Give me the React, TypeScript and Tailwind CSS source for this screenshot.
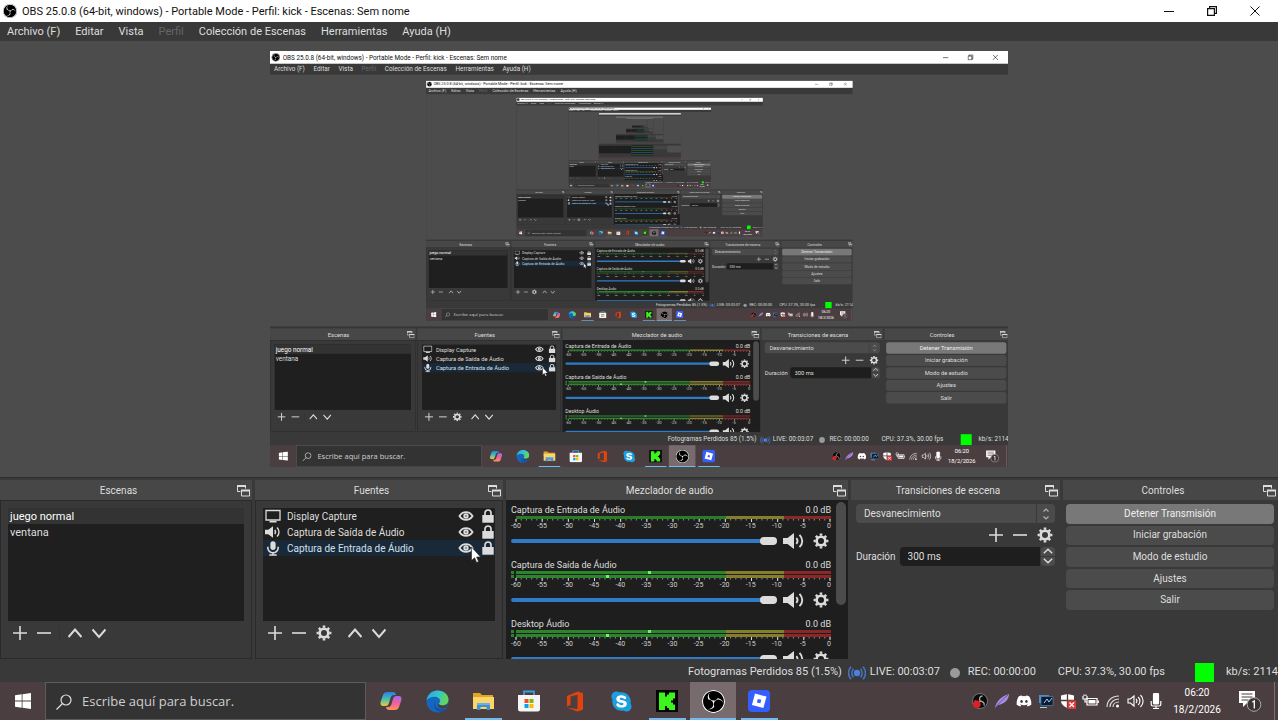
import { useId, type ReactNode } from "react";
import { FaDiscord, FaSkype } from "react-icons/fa";
import { SiObsstudio } from "react-icons/si";

const DETAILED_LEVELS = 4;
const NESTED_LEVELS = 8;

/* ---------- icons ---------- */

function ObsLogo({ className }: { className: string }) {
  return (
    <span className={`flex shrink-0 items-center justify-center rounded-full bg-black text-white ${className}`}>
      <SiObsstudio className="h-full w-full" />
    </span>
  );
}

function PlusIcon() {
  return (
    <svg viewBox="0 0 14 14" className="size-3.5" stroke="#dcdcdc" strokeWidth="1.6">
      <path d="M7 0v14M0 7h14" />
    </svg>
  );
}

function MinusIcon() {
  return (
    <svg viewBox="0 0 14 14" className="size-3.5" stroke="#dcdcdc" strokeWidth="1.6">
      <path d="M0 7h14" />
    </svg>
  );
}

function UpIcon() {
  return (
    <svg viewBox="0 0 14 14" className="size-3.5" fill="none" stroke="#dcdcdc" strokeWidth="2">
      <path d="M0.5 11 7 3.6l6.500 7.400" />
    </svg>
  );
}

function DownIcon() {
  return (
    <svg viewBox="0 0 14 14" className="size-3.5" fill="none" stroke="#dcdcdc" strokeWidth="2">
      <path d="M0.500 3.500 7 10.900l6.500-7.400" />
    </svg>
  );
}

function GearIcon() {
  return (
    <svg viewBox="0 0 16 16" className="size-4" fill="none" stroke="#dcdcdc">
      <circle cx="8" cy="8" r="4.300" strokeWidth="2.600" />
      <g strokeWidth="2.600">
        <path d="M8 .6v2.200M8 13.200v2.200M.6 8h2.200M13.200 8h2.200" />
        <path d="m2.800 2.800 1.500 1.500M11.700 11.700l1.500 1.500M2.800 13.200l1.500-1.500M11.700 4.300l1.500-1.500" />
      </g>
    </svg>
  );
}

function FloatIcon() {
  return (
    <svg viewBox="0 0 13 13" className="size-[13px]" fill="none" stroke="#dcdcdc">
      <path d="M3.500 7.500h-3v-6h8v3" />
      <path d="M0 2h9" strokeWidth="2" />
      <path d="M4.500 6.500h8v5.500h-8z" />
      <path d="M4 6.500h9" strokeWidth="2" />
    </svg>
  );
}

function MonitorIcon() {
  return (
    <svg viewBox="0 0 16 14" className="h-3.5 w-4" fill="none" stroke="#dcdcdc" strokeWidth="1.300">
      <path d="M1 1.500h14v9.500H1z" />
      <path d="M4.500 12.700h7" strokeWidth="1.600" />
    </svg>
  );
}

function SpeakerIcon({ className }: { className: string }) {
  return (
    <svg viewBox="0 0 22 16" className={className} fill="none" stroke="#dcdcdc" strokeWidth="1.900">
      <path d="M0 5h4.500L11 0v16l-6.500-5H0z" fill="#dcdcdc" stroke="none" />
      <path d="M13.300 5.200c1.500 1.700 1.500 3.900 0 5.600M16.500 1.800c3.700 3.700 3.700 8.700 0 12.400" />
    </svg>
  );
}

function MicIcon() {
  return (
    <svg viewBox="0 0 16 16" className="h-[15px] w-4" fill="none" stroke="#dcdcdc" strokeWidth="1.700">
      <rect x="5.200" y="0.300" width="5.600" height="9.200" rx="2.800" fill="#dcdcdc" stroke="none" />
      <path d="M2.500 6v1.500a5.500 5 0 0 0 11 0V6M8 12.500V15M4 14.900h8" />
    </svg>
  );
}

function EyeIcon() {
  return (
    <svg viewBox="0 0 16 12" className="h-3 w-4" fill="none" stroke="#dcdcdc" strokeWidth="1.900">
      <path d="M1.500 6c3.200-5.200 9.800-5.200 13 0-3.200 5.200-9.800 5.200-13 0z" />
      <circle cx="8" cy="6" r="1.700" strokeWidth="2" />
    </svg>
  );
}

function LockIcon() {
  return (
    <svg viewBox="0 0 12 14" className="h-3.5 w-3" fill="none" stroke="#dcdcdc" strokeWidth="1.700">
      <path d="M3 6.500V4a3 3 0 0 1 6 0v2.500" />
      <path d="M.3 6h11.400v7.700H.3z" fill="#dcdcdc" stroke="none" />
    </svg>
  );
}

function CursorArrow() {
  return (
    <svg viewBox="0 0 10 17" className="h-[18px] w-2.5" fill="#fff" stroke="#222" strokeWidth=".6">
      <path d="M.5.5v13.600l3.100-2.900 2 4.800 2-.9-2-4.600h4z" />
    </svg>
  );
}

/* ---------- window chrome ---------- */

function TitleBar() {
  return (
    <header className="flex h-[22px] shrink-0 items-center bg-white text-[#111]">
      <ObsLogo className="ml-[3px] mr-[5px] size-3.5" />
      <h1 className="flex-1 truncate pt-px text-[11px] leading-5">
        OBS 25.0.8 (64-bit, windows) - Portable Mode - Perfil: kick - Escenas: Sem nome
      </h1>
      <div className="mr-0.5 flex h-full">
        <button aria-label="Minimizar" className="flex w-[43px] items-center justify-center">
          <svg viewBox="0 0 10 10" className="size-2.5" stroke="#111" fill="none">
            <path d="M0 5.500h10" />
          </svg>
        </button>
        <button aria-label="Restaurar" className="flex w-[43px] items-center justify-center">
          <svg viewBox="0 0 10 10" className="size-2.5" stroke="#111" strokeWidth="1.200" fill="none">
            <path d="M.6 2.600h6.800v6.800H.6zM2.600 2.400V.6h6.800v6.800H7.600" />
          </svg>
        </button>
        <button aria-label="Cerrar" className="flex w-[43px] items-center justify-center">
          <svg viewBox="0 0 10 10" className="size-2.5" stroke="#111" fill="none">
            <path d="m.5.5 9 9M9.500.5l-9 9" />
          </svg>
        </button>
      </div>
    </header>
  );
}

const MENU = ["Archivo (F)", "Editar", "Vista", "Perfil", "Colección de Escenas", "Herramientas", "Ayuda (H)"];

function MenuBar() {
  return (
    <nav className="flex h-[19px] shrink-0 items-center gap-[15px] px-[7px] pt-0.5 text-[11px] text-[#dedede]">
      {MENU.map((item) => (
        <button key={item} disabled={item === "Perfil"} className="disabled:text-[#666]">
          {item}
        </button>
      ))}
    </nav>
  );
}

/* ---------- docks ---------- */

function Dock({ title, children, framed }: { title: string; children: ReactNode; framed?: boolean }) {
  return (
    <section className="flex min-h-0 min-w-0 flex-col">
      <div className="flex h-5 shrink-0 items-center bg-[#474747] pr-0.5">
        <h2 className="flex-1 pt-px text-center text-[10px]">{title}</h2>
        <button aria-label={`Desacoplar ${title}`}>
          <FloatIcon />
        </button>
      </div>
      <div
        className={
          framed
            ? "flex min-h-0 flex-1 flex-col border border-[#2a2a2a] px-[7px] pt-[7px]"
            : "flex min-h-0 flex-1 flex-col"
        }
      >
        {children}
      </div>
    </section>
  );
}

function ScenesDock() {
  return (
    <Dock title="Escenas" framed>
      <ul className="h-[113px] shrink-0 bg-[#1f1f1f] text-[11px] leading-[18px]">
        <li className="h-4 bg-[#333] px-0.5 text-white">juego normal</li>
        <li className="h-4 px-0.5">ventana</li>
      </ul>
      <div className="flex items-center gap-2.5 px-[5px] pt-[5px]">
        <button aria-label="Agregar escena"><PlusIcon /></button>
        <button aria-label="Quitar escena"><MinusIcon /></button>
        <span className="-mx-0.5 h-3.5 w-px bg-[#333]" />
        <button aria-label="Subir escena"><UpIcon /></button>
        <button aria-label="Bajar escena"><DownIcon /></button>
      </div>
    </Dock>
  );
}

const SOURCES = [
  { name: "Display Capture", icon: <MonitorIcon />, selected: false },
  { name: "Captura de Saída de Áudio", icon: <SpeakerIcon className="h-3 w-4" />, selected: false },
  { name: "Captura de Entrada de Áudio", icon: <MicIcon />, selected: true },
];

function SourcesDock() {
  return (
    <Dock title="Fuentes" framed>
      <ul className="h-[113px] shrink-0 bg-[#1f1f1f] text-[10px] leading-4">
        {SOURCES.map((s) => (
          <li
            key={s.name}
            className={
              s.selected
                ? "relative flex h-4 items-center bg-[#1a2938] pl-0.5 pr-px text-[#cfe0f0]"
                : "flex h-4 items-center pl-0.5 pr-px"
            }
          >
            {s.icon}
            <span className="ml-1.5 flex-1 truncate pt-px">{s.name}</span>
            <button aria-label={`Mostrar ${s.name}`}><EyeIcon /></button>
            <button aria-label={`Bloquear ${s.name}`} className="ml-2"><LockIcon /></button>
            {s.selected && (
              <span className="pointer-events-none absolute right-3.5 top-1.5">
                <CursorArrow />
              </span>
            )}
          </li>
        ))}
      </ul>
      <div className="flex items-center gap-2.5 px-[5px] pt-1">
        <button aria-label="Agregar fuente"><PlusIcon /></button>
        <button aria-label="Quitar fuente"><MinusIcon /></button>
        <button aria-label="Propiedades de fuente"><GearIcon /></button>
        <button aria-label="Subir fuente" className="ml-1.5"><UpIcon /></button>
        <button aria-label="Bajar fuente"><DownIcon /></button>
      </div>
    </Dock>
  );
}

const DB_MARKS = [-60, -55, -50, -45, -40, -35, -30, -25, -20, -15, -10, -5, 0];
const MINOR_TICKS = Array.from({ length: 61 }, (_, i) => `M${i} 0v1.500`).join("");
const MAJOR_TICKS = DB_MARKS.map((db) => `M${db + 60} 0v3`).join("");

function MeterBar({ stereo, peak }: { stereo: boolean; peak?: number }) {
  return (
    <div className="flex h-[3px]">
      <span className={stereo ? "w-[3px] bg-[#2c842c]" : "w-[3px]"} />
      <svg viewBox="0 0 315 3" preserveAspectRatio="none" className="ml-0.5 h-[3px] min-w-0 flex-1">
        <path d="M0 0h210v3H0z" fill={stereo ? "#2c842c" : "#267f26"} />
        <path d="M210 0h58v3h-58z" fill="#857f2c" />
        <path d="M268 0h47v3h-47z" fill="#8a2828" />
        {peak !== undefined && <rect x={peak} y="0" width="3" height="3" fill="#5cff5c" />}
      </svg>
    </div>
  );
}

function Channel({ name, stereo }: { name: string; stereo: boolean }) {
  const id = useId();
  return (
    <div className={stereo ? "h-[59px] shrink-0" : "h-[55px] shrink-0"}>
      <div className="flex h-3 items-center justify-between text-[9px] leading-3">
        <label htmlFor={id}>{name}</label>
        <span>0.0 dB</span>
      </div>
      <div className="flex flex-col gap-px">
        <MeterBar stereo={stereo} peak={stereo ? 132 : undefined} />
        {stereo && <MeterBar stereo peak={90} />}
      </div>
      <svg viewBox="0 0 60 3" preserveAspectRatio="none" className="ml-[5px] h-[3px] w-[calc(100%-6px)] overflow-visible">
        <path d={MINOR_TICKS} stroke="#8a8a8a" strokeWidth="1" vectorEffect="non-scaling-stroke" />
        <path d={MAJOR_TICKS} stroke="#dcdcdc" strokeWidth="1" vectorEffect="non-scaling-stroke" />
      </svg>
      <div className="-ml-[3px] -mr-1.5 flex h-2 justify-between text-center text-[7px] leading-[8px] text-[#cfcfcf]">
        {DB_MARKS.map((db) => (
          <span key={db} className="w-4">{db}</span>
        ))}
      </div>
      <div className="mt-px flex h-5 items-center">
        <input
          id={id}
          type="range"
          defaultValue={100}
          className="h-1 min-w-0 flex-1 appearance-none rounded-sm bg-[#2f7bc8] [&::-webkit-slider-thumb]:h-2 [&::-webkit-slider-thumb]:w-[17px] [&::-webkit-slider-thumb]:appearance-none [&::-webkit-slider-thumb]:rounded-sm [&::-webkit-slider-thumb]:bg-[#dcdcdc]"
        />
        <button aria-label={`Silenciar ${name}`} className="ml-1.5">
          <SpeakerIcon className="h-4 w-[22px]" />
        </button>
        <button aria-label={`Ajustes de ${name}`} className="ml-2 mr-0.5">
          <GearIcon />
        </button>
      </div>
    </div>
  );
}

function MixerDock() {
  return (
    <Dock title="Mezclador de audio">
      <div className="flex min-h-0 flex-1 overflow-hidden bg-[#1e1e1e] pl-[5px]">
        <div className="min-w-0 flex-1 pt-1">
          <Channel name="Captura de Entrada de Áudio" stereo={false} />
          <Channel name="Captura de Saída de Áudio" stereo />
          <Channel name="Desktop Áudio" stereo />
        </div>
        <div className="ml-[5px] mr-0.5 w-2.5 pt-0.5">
          <div className="h-[103px] rounded-full bg-[#4c4c4c]" />
        </div>
      </div>
    </Dock>
  );
}

function TransitionsDock() {
  const id = useId();
  return (
    <Dock title="Transiciones de escena">
      <div className="flex flex-col px-[5px] pt-1 text-[10px]">
        <div className="relative">
          <select
            aria-label="Transición"
            className="block h-[19px] w-full appearance-none rounded-sm bg-[#4b4b4b] pl-2 pr-6 text-[#dedede]"
          >
            <option>Desvanecimiento</option>
          </select>
          <span className="pointer-events-none absolute inset-y-0 right-0 flex w-[19px] items-center justify-center border-l border-[#3a3a3a]">
            <svg viewBox="0 0 8 12" className="h-3 w-2" fill="none" stroke="#b0b0b0" strokeWidth="1.200">
              <path d="m1.500 3.500 2.500-2.500 2.500 2.500M1.500 8.500l2.500 2.500 2.500-2.500" />
            </svg>
          </span>
        </div>
        <div className="flex h-[23px] items-center justify-end gap-2.5 pr-0.5">
          <button aria-label="Agregar transición"><PlusIcon /></button>
          <button aria-label="Quitar transición"><MinusIcon /></button>
          <button aria-label="Propiedades de transición"><GearIcon /></button>
        </div>
        <div className="flex h-5 items-center">
          <label htmlFor={id} className="mr-1">Duración</label>
          <input
            id={id}
            defaultValue="300 ms"
            className="h-[19px] w-0 min-w-0 flex-1 rounded-l-sm bg-[#1e1e1e] px-2 text-[10px]"
          />
          <div className="ml-px flex w-3.5 flex-col gap-px">
            <button aria-label="Aumentar" className="flex h-[9px] items-center justify-center rounded-t bg-[#4b4b4b]">
              <svg viewBox="0 0 10 6" className="h-1.5 w-2.5" fill="none" stroke="#dcdcdc" strokeWidth="1.500">
                <path d="m.8 5.200 4.200-4 4.200 4" />
              </svg>
            </button>
            <button aria-label="Disminuir" className="flex h-[9px] items-center justify-center rounded-b bg-[#4b4b4b]">
              <svg viewBox="0 0 10 6" className="h-1.5 w-2.5" fill="none" stroke="#dcdcdc" strokeWidth="1.500">
                <path d="m.8.8 4.200 4 4.200-4" />
              </svg>
            </button>
          </div>
        </div>
      </div>
    </Dock>
  );
}

const CONTROLS = ["Detener Transmisión", "Iniciar grabación", "Modo de estudio", "Ajustes", "Salir"];

function ControlsDock() {
  return (
    <Dock title="Controles">
      <div className="grid h-[110px] grid-rows-5 gap-0.5 pl-[3px] pr-1 pt-1 text-[10px]">
        {CONTROLS.map((label, i) => (
          <button
            key={label}
            className={
              i === 0
                ? "rounded-sm bg-[#787878] leading-4 text-[#eee]"
                : "rounded-sm bg-[#4b4b4b] leading-4"
            }
          >
            {label}
          </button>
        ))}
      </div>
    </Dock>
  );
}

function StatusBar() {
  return (
    <div className="flex h-[23px] shrink-0 items-center justify-end whitespace-nowrap pt-1 text-[11px] text-[#dedede]">
      <span>Fotogramas Perdidos 85 (1.5%)</span>
      <svg viewBox="0 0 18 14" className="ml-1.5 mr-1 h-3.5 w-[18px]" fill="none" stroke="#4a72c4" strokeWidth="1.500">
        <circle cx="9" cy="7" r="3.200" fill="#4f7fdc" stroke="none" />
        <path d="M5.500 2.800a6 6 0 0 0 0 8.400M12.500 2.800a6 6 0 0 1 0 8.400M3 .8a9 9 0 0 0 0 12.400M15 .8a9 9 0 0 1 0 12.400" />
      </svg>
      <span>LIVE: 00:03:07</span>
      <span className="ml-2.5 mr-2 size-2.5 rounded-full bg-[#9a9a9a]" />
      <span>REC: 00:00:00</span>
      <span className="ml-[22px]">CPU: 37.3%, 30.00 fps</span>
      <span className="ml-[30px] mr-3 size-[19px] bg-[#00ff00]" />
      <span>kb/s: 2114</span>
    </div>
  );
}

/* ---------- taskbar ---------- */

function CopilotIcon() {
  const id = useId();
  return (
    <svg viewBox="0 0 22 20" className="h-5 w-[22px]">
      <defs>
        <linearGradient id={`${id}a`} x1="0" y1="0" x2="0" y2="1">
          <stop offset="0" stopColor="#2b7de9" />
          <stop offset=".5" stopColor="#3fc1b0" />
          <stop offset="1" stopColor="#f3c53c" />
        </linearGradient>
        <linearGradient id={`${id}b`} x1="0" y1="0" x2="0" y2="1">
          <stop offset="0" stopColor="#a06bf0" />
          <stop offset=".5" stopColor="#ee5fa0" />
          <stop offset="1" stopColor="#ff9355" />
        </linearGradient>
      </defs>
      <path d="M7 1h6c2 0 2.500 1 3 3h-2c-2 0-3 1-3.500 3L9 12c-.6 2-1.500 3-3.500 3H3c-2 0-3-2-2.400-4L3 4c.6-2 2-3 4-3z" fill={`url(#${id}a)`} />
      <path d="M15 19H9c-2 0-2.500-1-3-3h2c2 0 3-1 3.500-3L13 8c.6-2 1.500-3 3.500-3H19c2 0 3 2 2.400 4L19 16c-.6 2-2 3-4 3z" fill={`url(#${id}b)`} />
    </svg>
  );
}

function EdgeIcon() {
  const id = useId();
  return (
    <svg viewBox="0 0 24 24" className="size-[23px]">
      <defs>
        <linearGradient id={id} x1="0" y1="0" x2="1" y2=".3">
          <stop offset="0" stopColor="#2aa5e0" />
          <stop offset=".6" stopColor="#35c8c4" />
          <stop offset="1" stopColor="#66d65a" />
        </linearGradient>
      </defs>
      <circle cx="12" cy="12" r="11.500" fill="#1566bd" />
      <path d="M.6 11C1.500 4.500 6.200.5 12 .5c6.500 0 11.500 4.300 11.500 9.500 0 4-3 6.200-6.300 6.200-2.700 0-4-1-3.700-2 .8-.9 1.200-1.700 1.200-2.900C14.700 8.800 12.200 7 8.800 7 5 7 1.800 8.800.6 11z" fill={`url(#${id})`} />
      <path d="M9.500 10.500c-2 4 .5 8.800 5.500 9.500 3 .4 5.400-.4 7-1.600-1 1.900-3 3.600-5.500 4.500-6-.2-10.500-5-7-12.400z" fill="#1a4f9a" />
      <path d="M13.500 14.200c-.3 1 1 2 3.700 2 2.200 0 4.200-.9 5.400-2.500-.2 2-.6 3.300-1.200 4.400-2 1.300-4.400 1.600-6.600.7-2.500-1-3-3.300-1.300-4.600z" fill="#4b3e41" />
    </svg>
  );
}

function FolderIcon() {
  return (
    <svg viewBox="0 0 21 18" className="h-[18px] w-[21px]">
      <path d="M0 1h7l2 2h11v5H0z" fill="#e0a526" />
      <path d="M0 5h21v12H0z" fill="#fbd568" />
      <path d="M4 11h13v7h-3.500v-3h-6v3H4z" fill="#3f8fd2" />
      <path d="M4 11h13v2H4z" fill="#64b0e8" />
    </svg>
  );
}

function StoreIcon() {
  return (
    <svg viewBox="0 0 22 22" className="size-[22px]">
      <path d="M6 6V1.500h10V6" fill="none" stroke="#38a0d8" strokeWidth="1.800" />
      <path d="M0 5h22v14a2.500 2.500 0 0 1-2.500 2.500h-17A2.500 2.500 0 0 1 0 19z" fill="#f5f5f5" />
      <path d="M6.500 9h4v4h-4z" fill="#f25022" />
      <path d="M11.500 9h4v4h-4z" fill="#7fba00" />
      <path d="M6.500 14h4v4h-4z" fill="#00a4ef" />
      <path d="M11.500 14h4v4h-4z" fill="#ffb900" />
    </svg>
  );
}

function OfficeIcon() {
  return (
    <svg viewBox="0 0 18 21" className="h-[21px] w-[18px]">
      <path d="M1 5 11.500.5 17 2.200v16.600l-5.500 1.700L1 16.800l10.500 1.300V3.700L4.500 5.500V14L1 15.500z" fill="#e2430d" />
    </svg>
  );
}

function SkypeIcon() {
  return (
    <span className="flex size-[21px] items-center justify-center rounded-full bg-[radial-gradient(circle,#fff_50%,transparent_52%)] text-[#1c9fe0]">
      <FaSkype className="size-[23px] shrink-0" />
    </span>
  );
}

function KickIcon() {
  return (
    <svg viewBox="0 0 22 22" className="size-[22px]">
      <path d="M0 0h22v22H0z" fill="#050505" />
      <path d="M3 2.500h6v4h2v-2h2v-2h6v6h-2v2h-2v2h2v2h2v5.500h-6v-2h-2v-2H9v4H3z" fill="#3cf51c" />
    </svg>
  );
}

function RobloxIcon() {
  return (
    <svg viewBox="0 0 22 22" className="size-[22px]">
      <rect width="22" height="22" rx="4" fill="#335fff" />
      <path d="M7 3.500 18.500 6.600l-3.100 11.500-11.500-3.100zM9.800 8.900l-.9 3.500 3.500.9.900-3.500z" fill="#fff" fillRule="evenodd" />
    </svg>
  );
}

type AppState = "idle" | "open" | "active";

const APPS: { name: string; icon: ReactNode; state: AppState }[] = [
  { name: "Copilot", icon: <CopilotIcon />, state: "idle" },
  { name: "Edge", icon: <EdgeIcon />, state: "idle" },
  { name: "Explorador", icon: <FolderIcon />, state: "open" },
  { name: "Store", icon: <StoreIcon />, state: "idle" },
  { name: "Office", icon: <OfficeIcon />, state: "idle" },
  { name: "Skype", icon: <SkypeIcon />, state: "idle" },
  { name: "Kick", icon: <KickIcon />, state: "open" },
  { name: "OBS", icon: <ObsLogo className="size-[23px]" />, state: "active" },
  { name: "Roblox", icon: <RobloxIcon />, state: "open" },
];

function TrayIcons() {
  return (
    <div className="flex items-center gap-1.5 text-white">
      <svg viewBox="0 0 16 16" className="size-4">
        <circle cx="8" cy="8" r="7.500" fill="#0a0a0a" stroke="#888" strokeWidth=".8" />
        <path d="M8 8c-1-3 0-5 2.500-5M8 8c3.200.6 4.800 2 4 4.500M8 8c-2.200 1.500-4 1.200-5-.5" fill="none" stroke="#aaa" strokeWidth="1.300" />
        <circle cx="4.800" cy="11.300" r="3.800" fill="#e02020" />
      </svg>
      <svg viewBox="0 0 16 16" className="size-4">
        <path d="M1 15C2 9 7 3 15 1c0 5-4 10-11 11z" fill="#a98be0" />
        <path d="M1 15C5 10 9 6 14 2" stroke="#6f4fb8" fill="none" />
      </svg>
      <FaDiscord className="size-4" />
      <svg viewBox="0 0 16 16" className="size-4">
        <path d="M1 2h10v8H1z" fill="#4a90c8" />
        <path d="M3 3.500h12v9H3z" fill="#0e1c30" stroke="#5f8fb8" strokeWidth=".6" />
        <path d="m6 10 3-4 2 3 3-4M2 14.500h7" stroke="#9ad4ff" fill="none" />
      </svg>
      <svg viewBox="0 0 16 16" className="size-4">
        <path d="M1 2.500 7.500 1 14 2.500V8c0 3-3 5.500-6.500 7C4 13.500 1 11 1 8z" fill="#fff" />
        <path d="M7.500 1v14M1 7.500h13" stroke="#4b3e41" strokeWidth="1.300" />
        <path d="M7.500 7.500H16V16H7.500z" fill="#e03a34" />
        <path d="m9.500 9.500 4.500 4.500M14 9.500 9.500 14" stroke="#fff" strokeWidth="1.300" />
      </svg>
      <svg viewBox="0 0 17 16" className="h-4 w-[17px]" fill="none" stroke="#fff" strokeWidth="1.200">
        <path d="M5 5.500h10v6.500H5zM16.300 7.500v2.500" />
        <path d="M6.500 7h7v3.500h-7z" fill="#fff" stroke="none" />
        <path d="M1 3v3h4V3M2 1.500V3M4 1.500V3M3 6v3h2" />
      </svg>
      <svg viewBox="0 0 16 16" className="size-4" fill="none" stroke="#d8d8d8" strokeWidth="1.200">
        <path d="M2 14C2 7.500 7 3 14 3M5 14c0-4.800 4-8 9-8M8 14c0-3 2.500-5 6-5" />
        <circle cx="12.500" cy="13" r="1.500" fill="#fff" stroke="none" />
      </svg>
      <svg viewBox="0 0 17 16" className="h-4 w-[17px]" fill="none" stroke="#fff" strokeWidth="1.100">
        <path d="M1 6h2.500L7 3v10L3.500 10H1zM9 6c1.200 1.200 1.200 2.800 0 4M11.200 4c2.300 2.300 2.300 5.700 0 8M13.500 2c3.500 3.500 3.500 8.500 0 12" />
      </svg>
      <svg viewBox="0 0 12 16" className="h-4 w-3" fill="none" stroke="#fff" strokeWidth="1.200">
        <rect x="3.500" y="0.500" width="5" height="10.500" rx="1" fill="#fff" />
        <path d="M1.200 8v3.500c0 1 .8 1.500 1.800 1.500h6c1 0 1.800-.5 1.800-1.500V8M6 13v3M3 15.500h6" />
      </svg>
    </div>
  );
}

function Taskbar() {
  return (
    <footer className="flex h-[38px] shrink-0 items-stretch bg-[#4b3e41]">
      <button aria-label="Inicio" className="flex w-[45px] items-center justify-center">
        <svg viewBox="0 0 16 16" className="size-4" fill="#fff">
          <path d="M0 2.300 6.700 1.300v6.300H0zM7.500 1.200 16 0v7.600H7.500zM0 8.400h6.700v6.300L0 13.700zM7.500 8.400H16V16l-8.500-1.200z" />
        </svg>
      </button>
      <label className="flex w-[321px] items-center border border-[#5c5c5c] bg-[#333] pl-2.5 pt-px">
        <svg viewBox="0 0 16 16" className="size-4" fill="none" stroke="#dedede" strokeWidth="1.200">
          <circle cx="10" cy="6" r="5" />
          <path d="M6.500 9.500.5 15.500" />
        </svg>
        <input
          aria-label="Buscar"
          placeholder="Escribe aquí para buscar."
          className="ml-2.5 min-w-0 flex-1 bg-transparent font-['Open_Sans','Noto_Sans',sans-serif] text-[13px] text-white placeholder:text-[#cfcfcf]"
        />
      </label>
      <div className="ml-0.5 flex">
        {APPS.map((app) => (
          <button
            key={app.name}
            aria-label={app.name}
            className={
              app.state === "active"
                ? "flex w-[46px] flex-col items-center bg-[#786b6e]"
                : "flex w-[46px] flex-col items-center"
            }
          >
            <span className="flex flex-1 items-center justify-center">{app.icon}</span>
            {app.state !== "idle" && (
              <span
                className={
                  app.state === "active" ? "-mt-0.5 h-0.5 w-full bg-[#76b9ed]" : "-mt-0.5 h-0.5 w-[37px] bg-[#76b9ed]"
                }
              />
            )}
          </button>
        ))}
      </div>
      <div className="ml-auto flex items-center text-white">
        <TrayIcons />
        <div className="ml-2 w-[54px] text-center text-[10px] leading-[17px]">
          <div>06:20</div>
          <div>18/2/2026</div>
        </div>
        <button aria-label="Notificaciones" className="ml-3.5 mr-3">
          <svg viewBox="0 0 24 24" className="size-6">
            <path d="M1 2h16v12H9l-4 4v-4H1z" fill="#fff" />
            <path d="M3.500 5h11M3.500 8h11M3.500 11h7" stroke="#4b3e41" />
            <circle cx="16" cy="15.500" r="6.800" fill="#3b3436" stroke="#aaa" />
            <path d="M14.300 13.200 16.300 12v7.500" fill="none" stroke="#fff" strokeWidth="1.300" />
          </svg>
        </button>
        <span className="mr-[3px] h-full w-px bg-[#7c7073]" />
      </div>
    </footer>
  );
}

/* ---------- desktop: the preview shows the captured display inside itself ---------- */

const DOCK_GRID =
  "grid h-[182px] shrink-0 grid-cols-[minmax(0,252fr)_minmax(0,248fr)_minmax(0,342fr)_minmax(0,209fr)_minmax(0,215fr)] grid-rows-[minmax(0,1fr)] gap-[3px] border-t border-[#303030] pt-0.5";

function Preview({ level }: { level: number }) {
  return (
    <main className="flex min-h-0 flex-1 items-center justify-center overflow-hidden bg-[#4c4c4c]">
      {level < NESTED_LEVELS && (
        <div className="h-[416px] w-[738px] shrink-0 overflow-hidden" inert>
          <div className="h-[720px] w-[1278px] origin-top-left scale-[0.578]">
            <Desktop level={level + 1} />
          </div>
        </div>
      )}
    </main>
  );
}

/* Past a few levels every label is smaller than a pixel, so only the panels are painted. */
function DistantDesktop({ level }: { level: number }) {
  return (
    <div className="flex h-full w-full flex-col overflow-hidden bg-[#393939]">
      <div className="h-6 shrink-0 bg-[#d8d8d8]" />
      <div className="h-[18px] shrink-0" />
      <Preview level={level} />
      <div className={DOCK_GRID}>
        <div className="mb-9 mt-7 bg-[#1f1f1f]" />
        <div className="mb-9 mt-7 bg-[#1f1f1f]" />
        <div className="mt-5 flex flex-col justify-between bg-[#1e1e1e] pb-2 pt-3">
          <div className="h-2 bg-[#2c702c]" />
          <div className="h-2 bg-[#2f6fae]" />
          <div className="h-2 bg-[#2c842c]" />
          <div className="h-2 bg-[#2f6fae]" />
          <div className="h-2 bg-[#2c842c]" />
        </div>
        <div className="mb-24 mt-6 bg-[#444]" />
        <div className="mb-12 mt-6 bg-[#4f4f4f]" />
      </div>
      <div className="h-[23px] shrink-0" />
      <div className="h-[38px] shrink-0 bg-[#4b3e41]" />
    </div>
  );
}

function Desktop({ level }: { level: number }) {
  if (level > DETAILED_LEVELS) return <DistantDesktop level={level} />;
  return (
    <div className="flex h-full w-full flex-col overflow-hidden bg-[#393939] font-['Roboto','Noto_Sans',sans-serif] text-[#dedede]">
      <TitleBar />
      <MenuBar />
      <Preview level={level} />
      <div className={DOCK_GRID}>
        <ScenesDock />
        <SourcesDock />
        <MixerDock />
        <TransitionsDock />
        <ControlsDock />
      </div>
      <StatusBar />
      <Taskbar />
    </div>
  );
}

export default function App() {
  return (
    <div className="h-screen">
      <Desktop level={0} />
    </div>
  );
}
